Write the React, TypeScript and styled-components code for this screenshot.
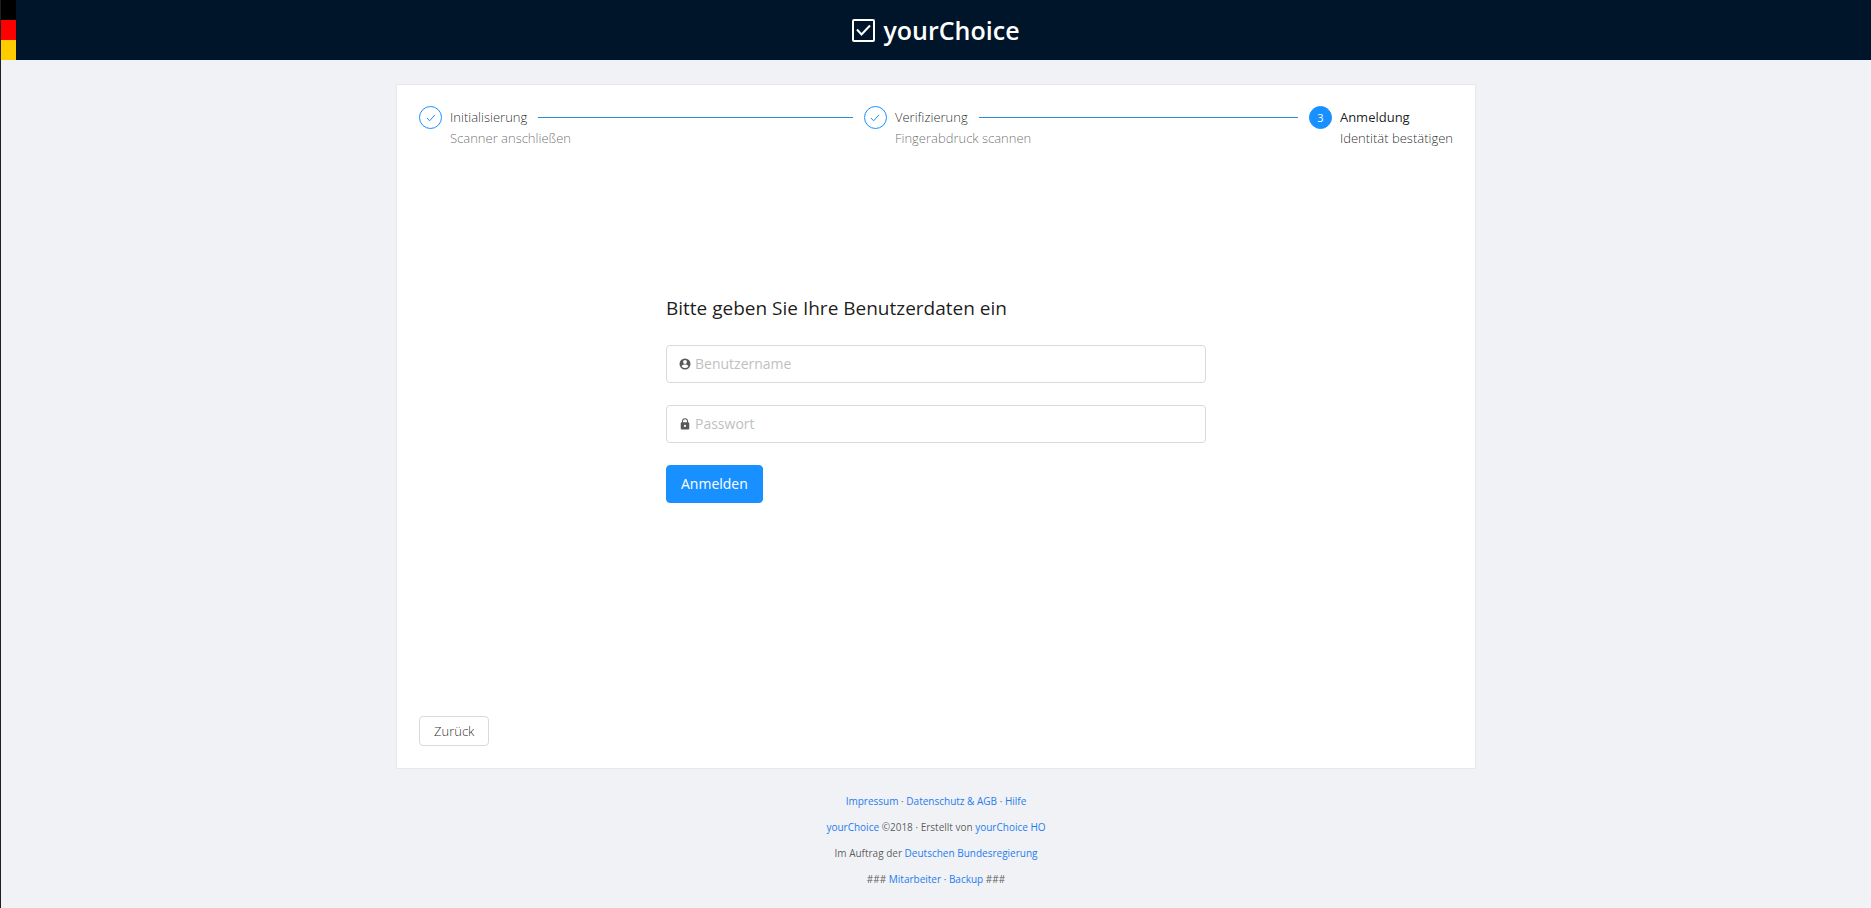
import React from "react";
import styled, { createGlobalStyle } from "styled-components";

const GlobalStyle = createGlobalStyle`
  *, *::before, *::after { box-sizing: border-box; }
  body {
    margin: 0;
    background: #f0f2f5;
    color: rgba(0, 0, 0, 0.65);
    font: 13px/21px "Open Sans", "Noto Sans", sans-serif;
  }
  h1, h2, p, ol { margin: 0; padding: 0; }
  button, input { font: inherit; }
`;

const Page = styled.div`
  display: flex;
  flex-direction: column;
  min-height: 100vh;
  border-left: 1px solid #1f1f1f;
`;

const Header = styled.header`
  position: relative;
  display: flex;
  align-items: center;
  justify-content: center;
  height: 60px;
  background: #001529;
  color: #fff;
`;

const Flag = styled.div`
  position: absolute;
  inset: 0 auto 0 0;
  width: 15px;
  display: grid;
  grid-template-rows: repeat(3, 1fr);
`;

const Stripe = styled.span<{ $color: string }>`
  background: ${(p) => p.$color};
`;

const Brand = styled.h1`
  display: flex;
  align-items: center;
  gap: 8px;
  font-size: 25px;
  line-height: 32px;
  font-weight: 600;
`;

const Main = styled.main`
  flex: 1;
  display: flex;
  flex-direction: column;
  width: 100%;
  max-width: 1080px;
  margin: 24px auto 0;
  padding: 22px;
  background: #fff;
  border: 1px solid #e8e8e8;
`;

const Steps = styled.ol`
  display: flex;
  gap: 11px;
  list-style: none;
`;

const StepItem = styled.li<{ $last?: boolean }>`
  display: flex;
  flex: ${(p) => (p.$last ? "none" : "1")};
  gap: 8px;
`;

const StepIcon = styled.span<{ $active?: boolean }>`
  display: flex;
  flex: none;
  align-items: center;
  justify-content: center;
  width: 23px;
  height: 23px;
  margin-top: -1px;
  border: 1px solid #1890ff;
  border-radius: 50%;
  background: ${(p) => (p.$active ? "#1890ff" : "#fff")};
  color: ${(p) => (p.$active ? "#fff" : "#1890ff")};
  font-size: 11px;
`;

const StepBody = styled.div`
  flex: 1;
`;

const StepTitle = styled.div<{ $active?: boolean }>`
  display: flex;
  align-items: center;
  gap: 11px;
  color: ${(p) => (p.$active ? "rgba(0, 0, 0, 0.9)" : "rgba(0, 0, 0, 0.85)")};
  font-weight: ${(p) => (p.$active ? 500 : 300)};
`;

const StepLine = styled.span`
  flex: 1;
  height: 1px;
  background: #2f88d8;
`;

const StepText = styled.div<{ $active?: boolean }>`
  color: ${(p) => (p.$active ? "rgba(0, 0, 0, 0.85)" : "rgba(0, 0, 0, 0.6)")};
  font-weight: 300;
`;

const LoginForm = styled.form`
  display: flex;
  flex-direction: column;
  align-items: flex-start;
  gap: 22px;
  width: 540px;
  max-width: 100%;
  margin: auto;
  padding-bottom: 70px;
`;

const FormTitle = styled.h2`
  color: rgba(0, 0, 0, 0.9);
  font-size: 19px;
  line-height: 30px;
  font-weight: 500;
`;

const Field = styled.label`
  display: flex;
  align-items: center;
  gap: 4px;
  width: 100%;
  height: 38px;
  padding: 0 12px;
  border: 1px solid #d9d9d9;
  border-radius: 4px;
  color: rgba(0, 0, 0, 0.65);
`;

const TextInput = styled.input`
  flex: 1;
  min-width: 0;
  padding: 0;
  border: 0;
  outline: 0;
  background: none;
  color: inherit;
  font-size: 14px;
  &::placeholder { color: #bfbfbf; opacity: 1; }
`;

const Button = styled.button<{ $primary?: boolean }>`
  height: ${(p) => (p.$primary ? "38px" : "30px")};
  padding: 0 14px;
  border: 1px solid ${(p) => (p.$primary ? "#1890ff" : "#d9d9d9")};
  border-radius: 4px;
  background: ${(p) => (p.$primary ? "#1890ff" : "#fff")};
  color: ${(p) => (p.$primary ? "#fff" : "rgba(0, 0, 0, 0.85)")};
  font-size: ${(p) => (p.$primary ? "14px" : "13px")};
  font-weight: ${(p) => (p.$primary ? 400 : 300)};
  cursor: pointer;
`;

const Actions = styled.div`
  display: flex;
`;

const Footer = styled.footer`
  display: grid;
  gap: 8px;
  padding: 23px 16px 20px;
  font-size: 10px;
  line-height: 18px;
  text-align: center;
`;

const Link = styled.a`
  color: #1f7cf0;
  text-decoration: none;
`;

const Check = () => (
  <svg width="10" height="10" viewBox="0 0 10 10" fill="none" stroke="currentColor" aria-hidden="true">
    <path d="M1 5 3.600 7.800 9 1.800" />
  </svg>
);

const Logo = () => (
  <svg width="23" height="23" viewBox="0 0 23 23" fill="none" stroke="currentColor" strokeWidth="2" aria-hidden="true">
    <rect x="1" y="1" width="21" height="21" rx="1" />
    <path d="M5 10.500 9.500 15.500 18 6.500" />
  </svg>
);

const UserIcon = () => (
  <svg width="12" height="12" viewBox="0 0 24 24" fill="currentColor" aria-hidden="true">
    <path fillRule="evenodd" d="M12 1a11 11 0 1 0 0 22 11 11 0 0 0 0-22Zm0 3.200a3.800 3.800 0 1 1 0 7.600 3.800 3.800 0 0 1 0-7.600Zm0 15.800c-2.900 0-5.400-1.500-6.900-3.700.1-2.300 4.600-3.500 6.900-3.500s6.800 1.200 6.900 3.500A8.300 8.300 0 0 1 12 20Z" />
  </svg>
);

const LockIcon = () => (
  <svg width="12" height="12" viewBox="0 0 24 24" fill="currentColor" aria-hidden="true">
    <path fillRule="evenodd" d="M18.500 8.500H18V6.500a6 6 0 0 0-12 0v2h-.5a2 2 0 0 0-2 2V21a2 2 0 0 0 2 2h13a2 2 0 0 0 2-2V10.500a2 2 0 0 0-2-2ZM8 6.500a4 4 0 0 1 8 0v2H8v-2Zm4 11.500a2.200 2.200 0 1 1 0-4.400 2.200 2.200 0 0 1 0 4.400Z" />
  </svg>
);

const steps = [
  { title: "Initialisierung", text: "Scanner anschließen" },
  { title: "Verifizierung", text: "Fingerabdruck scannen" },
  { title: "Anmeldung", text: "Identität bestätigen" },
];

export default function App() {
  return (
    <Page>
      <GlobalStyle />
      <Header>
        <Flag>
          <Stripe $color="#000" />
          <Stripe $color="#f00" />
          <Stripe $color="#fc0" />
        </Flag>
        <Brand>
          <Logo />
          yourChoice
        </Brand>
      </Header>
      <Main>
        <Steps>
          {steps.map((step, i) => {
            const last = i === steps.length - 1;
            return (
              <StepItem key={step.title} $last={last}>
                <StepIcon $active={last}>{last ? i + 1 : <Check />}</StepIcon>
                <StepBody>
                  <StepTitle $active={last}>
                    {step.title}
                    {!last && <StepLine />}
                  </StepTitle>
                  <StepText $active={last}>{step.text}</StepText>
                </StepBody>
              </StepItem>
            );
          })}
        </Steps>
        <LoginForm onSubmit={(e) => e.preventDefault()}>
          <FormTitle>Bitte geben Sie Ihre Benutzerdaten ein</FormTitle>
          <Field>
            <UserIcon />
            <TextInput type="text" placeholder="Benutzername" aria-label="Benutzername" />
          </Field>
          <Field>
            <LockIcon />
            <TextInput type="password" placeholder="Passwort" aria-label="Passwort" />
          </Field>
          <Button type="submit" $primary>Anmelden</Button>
        </LoginForm>
        <Actions>
          <Button type="button">Zurück</Button>
        </Actions>
      </Main>
      <Footer>
        <p><Link href="#impressum">Impressum</Link> · <Link href="#agb">Datenschutz &amp; AGB</Link> · <Link href="#hilfe">Hilfe</Link></p>
        <p><Link href="#start">yourChoice</Link> ©2018 · Erstellt von <Link href="#ho">yourChoice HO</Link></p>
        <p>Im Auftrag der <Link href="#regierung">Deutschen Bundesregierung</Link></p>
        <p>### <Link href="#mitarbeiter">Mitarbeiter</Link> · <Link href="#backup">Backup</Link> ###</p>
      </Footer>
    </Page>
  );
}
